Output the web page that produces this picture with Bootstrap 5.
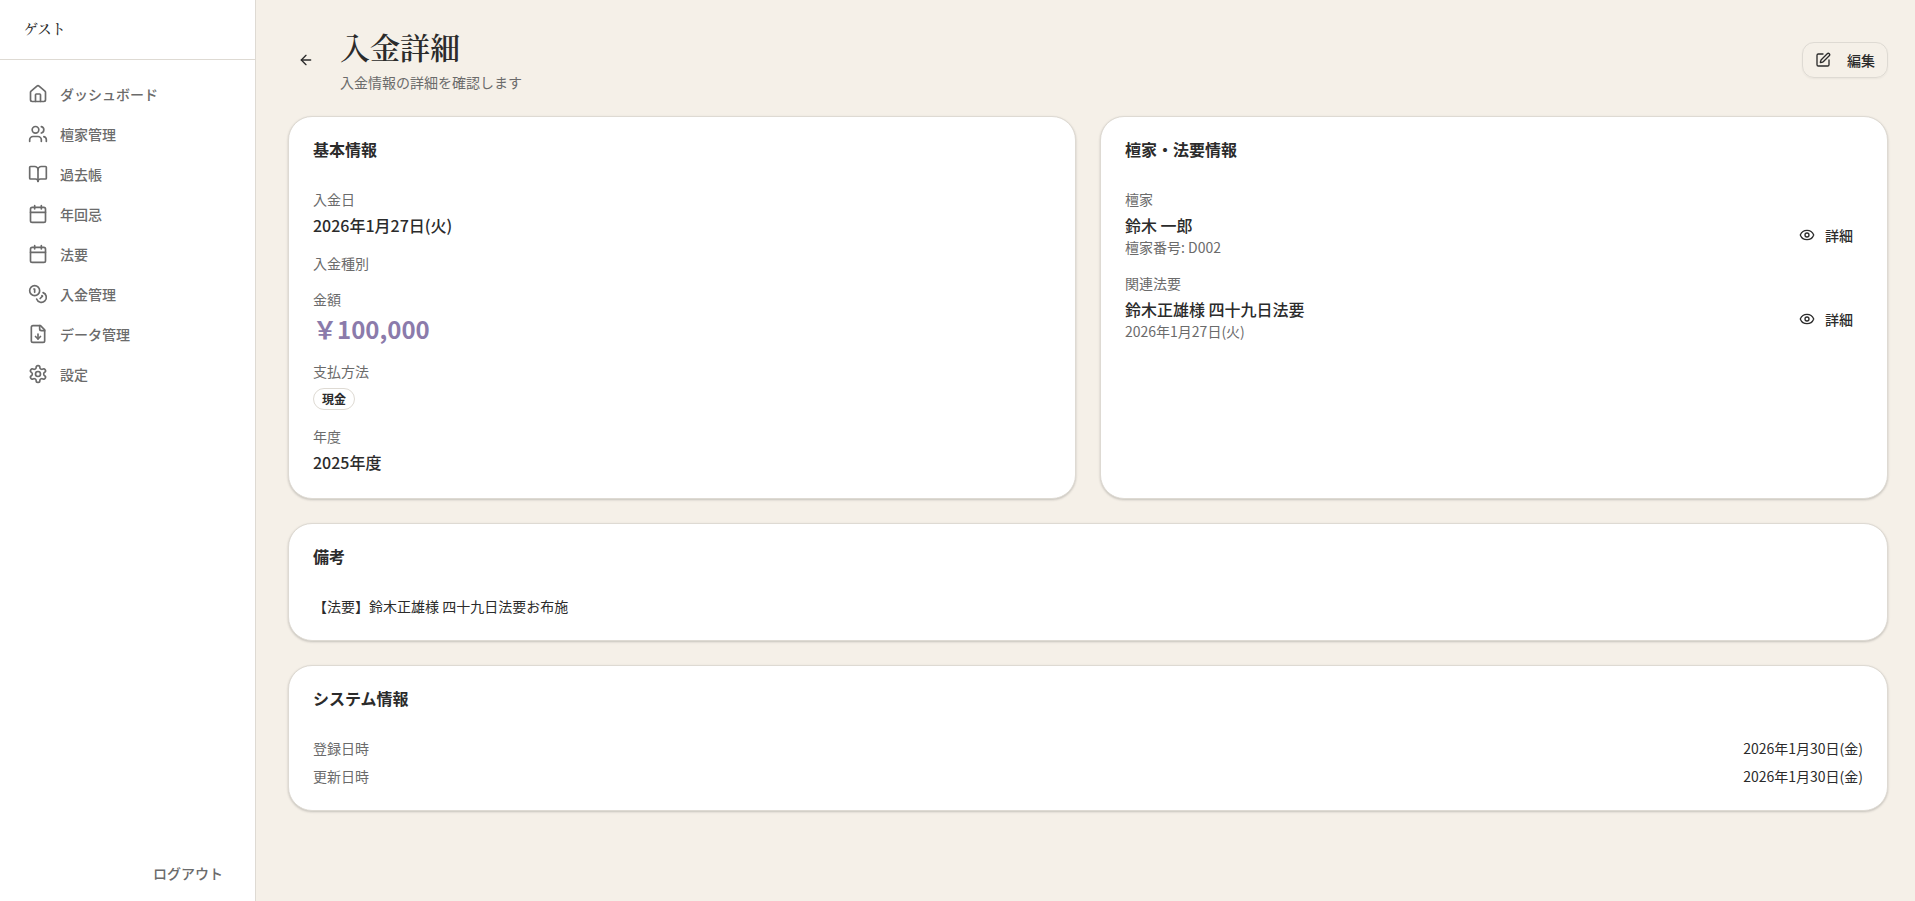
<!DOCTYPE html>
<html lang="ja">
<head>
<meta charset="utf-8">
<meta name="viewport" content="width=device-width, initial-scale=1">
<title>入金詳細</title>
<link href="https://cdn.jsdelivr.net/npm/bootstrap@5.3.0/dist/css/bootstrap.min.css" rel="stylesheet">
<style>
  :root { --ink: #2b2b2b; --soft: #6b6b6b; --line: #dedad3; --paper: #f5f0e8; --accent: #8b7bab; }
  body { font-family: "Noto Sans CJK JP", sans-serif; font-size: 14px; line-height: 20px; color: var(--ink); background: var(--paper); }
  .mincho { font-family: "Noto Serif CJK JP", "Noto Serif JP", serif; }
  svg { fill: none; stroke: currentColor; stroke-width: 2; stroke-linecap: round; stroke-linejoin: round; flex: none; }
  .i20 { width: 20px; height: 20px; }
  .i16 { width: 16px; height: 16px; }

  .side { width: 256px; background: #fff; border-right: 1px solid var(--line); }
  .side-head { height: 60px; padding: 18px 24px; font-weight: 500; border-bottom: 1px solid var(--line); }
  .side-foot { padding: 0 16px 10px; }
  .side .nav { gap: 4px; }
  .side .nav-link { display: flex; align-items: center; gap: 12px; height: 36px; padding: 0 12px; font-weight: 500; color: var(--soft); border-radius: 12px; }
  .side .nav-link:hover { background: var(--paper); color: var(--ink); }

  .page { padding: 28px 27px 28px 32px; }
  .page-title { font-size: 30px; line-height: 36px; font-weight: 600; margin-bottom: 8px; }
  .btn { --bs-btn-font-size: 14px; --bs-btn-line-height: 20px; --bs-btn-font-weight: 500; --bs-btn-color: var(--ink); --bs-btn-border-radius: 12px; --bs-btn-hover-bg: #ece6dc; height: 36px; display: inline-flex; align-items: center; }
  .btn-back { width: 36px; padding: 0; justify-content: center; }
  .btn-edit { --bs-btn-border-color: var(--line); --bs-btn-hover-border-color: var(--line); padding: 0 12px; gap: 16px; box-shadow: 0 1px 2px rgba(0,0,0,.05); }
  .btn-detail { padding: 0 9px; gap: 10px; }
  .btn-logout { --bs-btn-color: var(--soft); padding: 0 15px; }

  .card { --bs-card-border-color: var(--line); --bs-card-border-radius: 24px; --bs-card-bg: #fff; color: var(--ink); padding: 24px; box-shadow: 0 1px 3px rgba(0,0,0,.1), 0 1px 2px rgba(0,0,0,.1); }
  .card h2 { font-size: 16px; line-height: 16px; font-weight: 600; margin-bottom: 32px; }
  .soft { color: var(--soft); }
  dl, dd, dt { margin: 0; font-weight: 400; }
  .fields dt { color: var(--soft); }
  .fields dd { margin-top: 4px; }
  .fields .strong-line { font-size: 16px; line-height: 24px; font-weight: 500; }
  .fields .amount { font-size: 24px; line-height: 32px; font-weight: 700; color: var(--accent); }
  .fields .pill { width: fit-content; margin-top: 7px; font-size: 12px; line-height: 16px; font-weight: 600; padding: 2px 8px; border: 1px solid var(--line); border-radius: 11px; }
</style>
</head>
<body>
<div class="d-flex min-vh-100">
  <aside class="side d-flex flex-column flex-shrink-0">
    <div class="side-head mincho">ゲスト</div>
    <nav class="nav flex-column p-3">
      <a class="nav-link" href="#"><svg class="i20" viewBox="0 0 24 24"><path d="M15 21v-8a1 1 0 0 0-1-1h-4a1 1 0 0 0-1 1v8"/><path d="M3 10a2 2 0 0 1 .709-1.528l7-5.999a2 2 0 0 1 2.582 0l7 5.999A2 2 0 0 1 21 10v9a2 2 0 0 1-2 2H5a2 2 0 0 1-2-2z"/></svg>ダッシュボード</a>
      <a class="nav-link" href="#"><svg class="i20" viewBox="0 0 24 24"><path d="M16 21v-2a4 4 0 0 0-4-4H6a4 4 0 0 0-4 4v2"/><circle cx="9" cy="7" r="4"/><path d="M22 21v-2a4 4 0 0 0-3-3.87"/><path d="M16 3.13a4 4 0 0 1 0 7.75"/></svg>檀家管理</a>
      <a class="nav-link" href="#"><svg class="i20" viewBox="0 0 24 24"><path d="M12 7v14"/><path d="M3 18a1 1 0 0 1-1-1V4a1 1 0 0 1 1-1h5a4 4 0 0 1 4 4 4 4 0 0 1 4-4h5a1 1 0 0 1 1 1v13a1 1 0 0 1-1 1h-6a3 3 0 0 0-3 3 3 3 0 0 0-3-3z"/></svg>過去帳</a>
      <a class="nav-link" href="#"><svg class="i20" viewBox="0 0 24 24"><path d="M8 2v4"/><path d="M16 2v4"/><rect width="18" height="18" x="3" y="4" rx="2"/><path d="M3 10h18"/></svg>年回忌</a>
      <a class="nav-link" href="#"><svg class="i20" viewBox="0 0 24 24"><path d="M8 2v4"/><path d="M16 2v4"/><rect width="18" height="18" x="3" y="4" rx="2"/><path d="M3 10h18"/></svg>法要</a>
      <a class="nav-link" href="#"><svg class="i20" viewBox="0 0 24 24"><circle cx="8" cy="8" r="6"/><path d="M18.09 10.37A6 6 0 1 1 10.34 18"/><path d="M7 6h1v4"/><path d="m16.71 13.88.7.71-2.82 2.82"/></svg>入金管理</a>
      <a class="nav-link" href="#"><svg class="i20" viewBox="0 0 24 24"><path d="M15 2H6a2 2 0 0 0-2 2v16a2 2 0 0 0 2 2h12a2 2 0 0 0 2-2V7Z"/><path d="M14 2v4a2 2 0 0 0 2 2h4"/><path d="M12 18v-6"/><path d="m9 15 3 3 3-3"/></svg>データ管理</a>
      <a class="nav-link" href="#"><svg class="i20" viewBox="0 0 24 24"><path d="M12.22 2h-.44a2 2 0 0 0-2 2v.18a2 2 0 0 1-1 1.73l-.43.25a2 2 0 0 1-2 0l-.15-.08a2 2 0 0 0-2.73.73l-.22.38a2 2 0 0 0 .73 2.73l.15.1a2 2 0 0 1 1 1.72v.51a2 2 0 0 1-1 1.74l-.15.09a2 2 0 0 0-.73 2.73l.22.38a2 2 0 0 0 2.73.73l.15-.08a2 2 0 0 1 2 0l.43.25a2 2 0 0 1 1 1.73V20a2 2 0 0 0 2 2h.44a2 2 0 0 0 2-2v-.18a2 2 0 0 1 1-1.73l.43-.25a2 2 0 0 1 2 0l.15.08a2 2 0 0 0 2.73-.73l.22-.39a2 2 0 0 0-.73-2.73l-.15-.08a2 2 0 0 1-1-1.74v-.5a2 2 0 0 1 1-1.74l.15-.09a2 2 0 0 0 .73-2.73l-.22-.38a2 2 0 0 0-2.73-.73l-.15.08a2 2 0 0 1-2 0l-.43-.25a2 2 0 0 1-1-1.73V4a2 2 0 0 0-2-2z"/><circle cx="12" cy="12" r="3"/></svg>設定</a>
    </nav>
    <div class="side-foot mt-auto d-flex justify-content-end">
      <button type="button" class="btn btn-logout">ログアウト</button>
    </div>
  </aside>

  <main class="page flex-grow-1 d-flex flex-column gap-4">
    <header class="d-flex align-items-center justify-content-between">
      <div class="d-flex align-items-center gap-3">
        <button type="button" class="btn btn-back" aria-label="戻る"><svg class="i16" viewBox="0 0 24 24"><path d="m12 19-7-7 7-7"/><path d="M19 12H5"/></svg></button>
        <div>
          <h1 class="page-title mincho">入金詳細</h1>
          <p class="soft mb-0">入金情報の詳細を確認します</p>
        </div>
      </div>
      <button type="button" class="btn btn-edit"><svg class="i16" viewBox="0 0 24 24"><path d="M12 3H5a2 2 0 0 0-2 2v14a2 2 0 0 0 2 2h14a2 2 0 0 0 2-2v-7"/><path d="M18.375 2.625a1 1 0 0 1 3 3l-9.013 9.014a2 2 0 0 1-.853.505l-2.873.84a.5.5 0 0 1-.62-.62l.84-2.873a2 2 0 0 1 .506-.852z"/></svg>編集</button>
    </header>

    <div class="row g-4">
      <div class="col-12 col-lg-6">
        <section class="card h-100">
          <h2>基本情報</h2>
          <dl class="fields d-flex flex-column gap-3">
            <div><dt>入金日</dt><dd class="strong-line">2026年1月27日(火)</dd></div>
            <div><dt>入金種別</dt></div>
            <div><dt>金額</dt><dd class="amount">￥100,000</dd></div>
            <div><dt>支払方法</dt><dd class="pill">現金</dd></div>
            <div><dt>年度</dt><dd class="strong-line">2025年度</dd></div>
          </dl>
        </section>
      </div>
      <div class="col-12 col-lg-6">
        <section class="card h-100">
          <h2>檀家・法要情報</h2>
          <dl class="fields d-flex flex-column gap-3">
            <div>
              <dt>檀家</dt>
              <dd class="d-flex align-items-center justify-content-between">
                <div><div class="strong-line">鈴木 一郎</div><div class="soft">檀家番号: D002</div></div>
                <button type="button" class="btn btn-detail"><svg class="i16" viewBox="0 0 24 24"><path d="M2.062 12.348a1 1 0 0 1 0-.696 10.75 10.75 0 0 1 19.876 0 1 1 0 0 1 0 .696 10.75 10.75 0 0 1-19.876 0"/><circle cx="12" cy="12" r="3"/></svg>詳細</button>
              </dd>
            </div>
            <div>
              <dt>関連法要</dt>
              <dd class="d-flex align-items-center justify-content-between">
                <div><div class="strong-line">鈴木正雄様 四十九日法要</div><div class="soft">2026年1月27日(火)</div></div>
                <button type="button" class="btn btn-detail"><svg class="i16" viewBox="0 0 24 24"><path d="M2.062 12.348a1 1 0 0 1 0-.696 10.75 10.75 0 0 1 19.876 0 1 1 0 0 1 0 .696 10.75 10.75 0 0 1-19.876 0"/><circle cx="12" cy="12" r="3"/></svg>詳細</button>
              </dd>
            </div>
          </dl>
        </section>
      </div>
    </div>

    <section class="card">
      <h2>備考</h2>
      <p class="mb-0">【法要】鈴木正雄様 四十九日法要お布施</p>
    </section>

    <section class="card">
      <h2>システム情報</h2>
      <dl class="d-flex flex-column gap-2">
        <div class="d-flex justify-content-between"><dt class="soft">登録日時</dt><dd>2026年1月30日(金)</dd></div>
        <div class="d-flex justify-content-between"><dt class="soft">更新日時</dt><dd>2026年1月30日(金)</dd></div>
      </dl>
    </section>
  </main>
</div>
<script src="https://cdn.jsdelivr.net/npm/bootstrap@5.3.0/dist/js/bootstrap.bundle.min.js"></script>
</body>
</html>
